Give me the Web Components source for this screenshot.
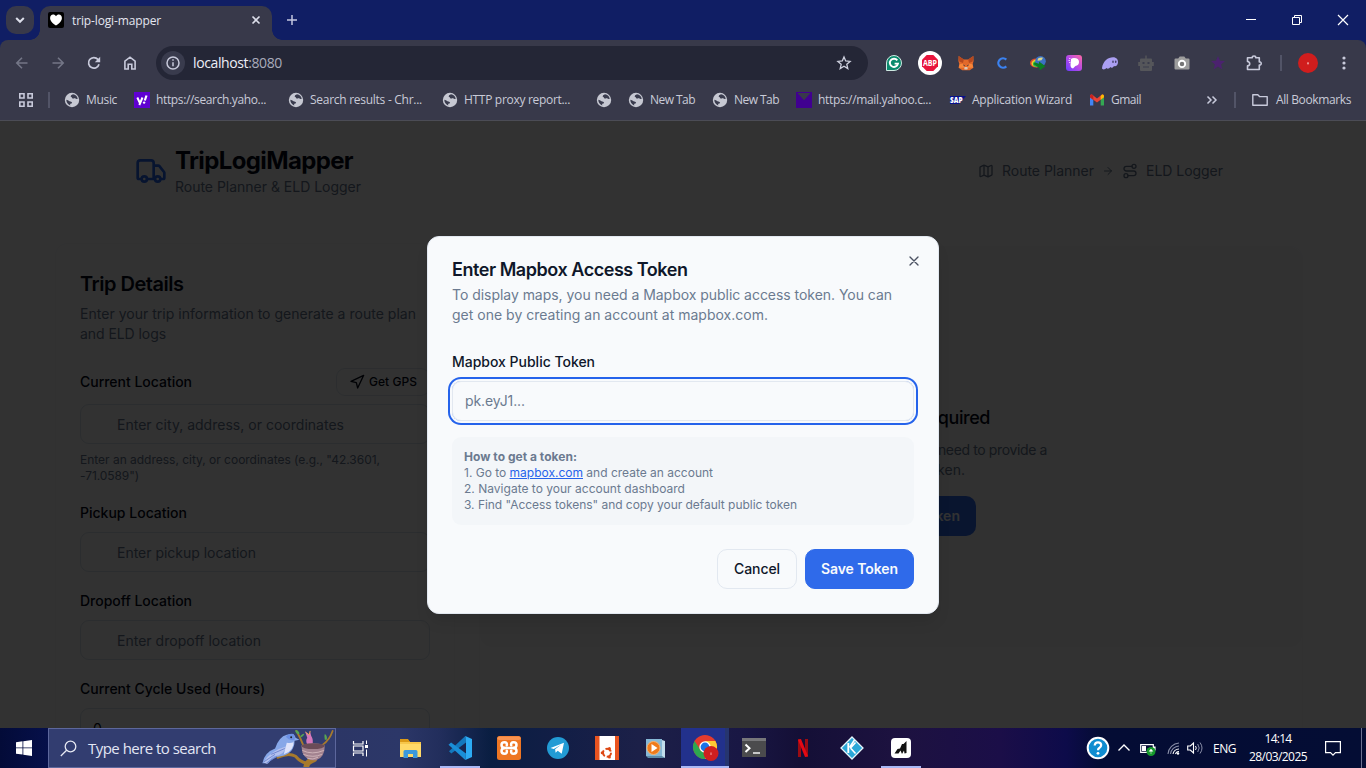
<!DOCTYPE html>
<html lang="en">
<head>
<meta charset="utf-8">
<title>trip-logi-mapper</title>
<style>
html,body{margin:0;height:768px;width:1366px;overflow:hidden;background:#101e64}
body{display:flex;flex-direction:column;font-family:"Open Sans","Noto Sans",sans-serif}
</style>
</head>
<body>
<browser-tabs></browser-tabs>
<browser-toolbar></browser-toolbar>
<bookmarks-bar></bookmarks-bar>
<app-page></app-page>
<task-bar></task-bar>
<script>
const L=(body,w=2)=>`<svg viewBox="0 0 24 24" fill="none" stroke="currentColor" stroke-width="${w}" stroke-linecap="round" stroke-linejoin="round">${body}</svg>`;
const V=(body,vb='0 0 24 24')=>`<svg viewBox="${vb}">${body}</svg>`;
const ICONS={
 truck:L('<path d="M14 18V6a2 2 0 0 0-2-2H4a2 2 0 0 0-2 2v11a1 1 0 0 0 1 1h2M15 18H9M19 18h2a1 1 0 0 0 1-1v-3.65a1 1 0 0 0-.22-.624l-3.48-4.35A1 1 0 0 0 17.52 8H14"/><circle cx="17" cy="18" r="2"/><circle cx="7" cy="18" r="2"/>'),
 map:L('<path d="M14.106 5.553a2 2 0 0 0 1.788 0l3.659-1.83A1 1 0 0 1 21 4.619v12.764a1 1 0 0 1-.553.894l-4.553 2.277a2 2 0 0 1-1.788 0l-4.212-2.106a2 2 0 0 0-1.788 0l-3.659 1.83A1 1 0 0 1 3 19.381V6.618a1 1 0 0 1 .553-.894l4.553-2.277a2 2 0 0 1 1.788 0zM15 5.764v15M9 3.236v15"/>'),
 arrow:L('<path d="M5 12h14M12 5l7 7-7 7"/>'),
 route:L('<circle cx="6" cy="19" r="3"/><path d="M9 19h8.5a3.5 3.5 0 0 0 0-7h-11a3.5 3.5 0 0 1 0-7H15"/><circle cx="18" cy="5" r="3"/>'),
 nav:L('<path d="M3 11 22 2l-9 19-2-8z"/>'),
 x:L('<path d="M18 6 6 18M6 6l12 12"/>'),
 chev:V('<path d="M8.2 10l3.8 3.8 3.8-3.8" fill="none" stroke="#dcdeea" stroke-width="2"/>'),
 heart:V('<rect width="16" height="16" rx="2" fill="#000"/><path d="M8 13.6C3.4 10.2 2.1 8.200 2.100 5.900 2.100 3.900 3.400 2.600 5.100 2.600c1.200 0 2.300.6 2.900 1.600.6-1 1.700-1.600 2.900-1.600 1.700 0 3 1.300 3 3.300 0 2.300-1.300 4.300-5.900 7.700z" fill="#fff"/>','0 0 16 16'),
 close:V('<path d="M4.500 4.500l7 7m0-7l-7 7" stroke="#dcdeea" stroke-width="1.600"/>','0 0 16 16'),
 plus:V('<path d="M8 3v10M3 8h10" stroke="#c3c7df" stroke-width="1.500"/>','0 0 16 16'),
 min:V('<path d="M3 7.500h10" stroke="#fff"/>','0 0 16 16'),
 restore:V('<path d="M3.500 5.500h7v7h-7zM5.500 5.500v-2h7v7h-2" fill="none" stroke="#fff"/>','0 0 16 16'),
 winx:V('<path d="M3 3l10 10M13 3L3 13" stroke="#fff" stroke-width="1.200"/>','0 0 16 16'),
 back:V('<path d="M13.500 8H3M8 2.800L2.800 8 8 13.200" fill="none" stroke="#747687" stroke-width="1.600"/>','0 0 16 16'),
 fwd:V('<path d="M2.500 8H13M8 2.800L13.200 8 8 13.200" fill="none" stroke="#747687" stroke-width="1.600"/>','0 0 16 16'),
 reload:V('<path d="M13 9.200A5.300 5.300 0 1 1 11.900 4.400L13.400 6" fill="none" stroke="#c8cadb" stroke-width="1.700"/><path d="M14.200 1.800v5.400H8.800z" fill="#c8cadb"/>','0 0 16 16'),
 home:V('<path d="M2.900 14V6.200L8 2.200l5.100 4V14h-3.300V9.200H6.200V14z" fill="none" stroke="#c8cadb" stroke-width="1.600"/>','0 0 16 16'),
 info:V('<circle cx="12" cy="12" r="12" fill="#393b4d"/><circle cx="12" cy="12" r="6" fill="none" stroke="#c8cadb" stroke-width="1.500"/><path d="M12 11.200v4M12 8.300v1.500" stroke="#c8cadb" stroke-width="1.500"/>'),
 star:V('<path d="M8 2l1.700 4 4.400.4-3.300 2.900 1 4.300L8 11.300l-3.800 2.300 1-4.300L1.900 6.400l4.400-.4z" fill="none" stroke="#d0d2e0" stroke-width="1.300"/>','0 0 16 16'),
 grammarly:V('<path d="M.5 15.500V8A7.500 7.500 0 1 1 8 15.500z" fill="#0b8a6d" stroke="#cfe9e2"/><path d="M11.300 5.400A4.100 4.100 0 1 0 12 8.600H8.600" fill="none" stroke="#fff" stroke-width="1.900"/>','0 0 16 16'),
 abp:V('<circle cx="12" cy="12" r="12" fill="#fff"/><path d="M8.700 4h6.600L20 8.700v6.600L15.300 20H8.700L4 15.300V8.700z" fill="#e8153d"/><text x="12" y="14.900" font-family="Open Sans" font-weight="700" font-size="8" text-anchor="middle" textLength="14" lengthAdjust="spacingAndGlyphs" fill="#fff">ABP</text>'),
 fox:V('<path d="M.6 1l5.200 3.400h4.400L15.400 1l.2 5-1 3.200.9 3.500-3.800 2.600H4.300L.5 12.700l.9-3.500L.4 6z" fill="#e2692a"/><path d="M.6 1l5.200 3.400L5 8 1.300 6.500zM15.400 1l-5.200 3.400L11 8l3.700-1.500z" fill="#b5481f"/><path d="M1.500 9.200L5 8.700l1.500 4-5.500 0zM14.500 9.200l-3.500-.5-1.500 4h5.500z" fill="#f8873a"/><path d="M4.800 9.600l2 .7-.4.9zM11.200 9.600l-2 .7.400.9z" fill="#263347"/><path d="M6.200 13l.5-1h2.600l.5 1-.4 1.600H6.600z" fill="#d9c4b4"/>','0 0 16 16'),
 cee:V('<path d="M12.300 4.600A4.700 4.700 0 1 0 12.300 11.400" fill="none" stroke="#3b82f0" stroke-width="2.300"/>','0 0 16 16'),
 idm:V('<ellipse cx="6" cy="8" rx="6" ry="4.500" fill="#dd4a2e"/><ellipse cx="6.500" cy="8.400" rx="5" ry="3.800" fill="#ecd02b"/><ellipse cx="7" cy="9" rx="4" ry="3" fill="#28b34b"/><circle cx="10.500" cy="6.300" r="5.300" fill="#3c72c4"/><path d="M8 3.500a5 3 0 0 1 5-.8l-1.500 2.500-4 .5z" fill="#d9d58c"/><path d="M5 7.500l4 1.200V6.500l6.500 4.700-6 4.300V13L3.500 9z" fill="#0a7d22"/>','0 0 16 16'),
 pcard:V('<defs><linearGradient id="g" x1="0" y1="1" x2="1" y2="0"><stop stop-color="#6a3cff"/><stop offset=".5" stop-color="#b64ae8"/><stop offset="1" stop-color="#ff6aa2"/></linearGradient></defs><rect width="16" height="16" rx="3" fill="url(#g)"/><path d="M5 4Q6 3 8 3q5 0 5 4 0 3.300-3.600 4L7 13.500Q4.500 13 4.500 10z" fill="#fff"/><path d="M3 3h1.500v1H3zM2.500 5H4v1H2.500zM3 7h1.500v1H3z" fill="#e9c6ff"/>','0 0 16 16'),
 phantom:V('<path d="M0 13C1 6 6 2.200 11 2.200c3.600 0 5.200 2.400 5 5.300-.2 3-2.400 4.200-4 3.400-1 1.900-2.600 2.300-3.600 1.200C7 14 5.400 14.300 4.600 13 3 14.800.2 15 0 13z" fill="#ab9ff2"/><ellipse cx="11" cy="6.700" rx=".8" ry="1.300" fill="#45416a"/><ellipse cx="13.700" cy="6.700" rx=".8" ry="1.300" fill="#45416a"/>','0 0 16 16'),
 robot:V('<path d="M7.300.5h1.400v3h4.300q1 0 1 1.200V7h1.800v4H14v4q0 1-1 1H3q-1 0-1-1v-4H.2V7H2V4.700q0-1.200 1-1.200h4.300z" fill="#55565a"/><path d="M4.500 7h2v2h-2zM9.500 7h2v2h-2zM5 11.500h6v1H5z" fill="#3b3d4c"/>','0 0 16 16'),
 camera:V('<path d="M.5 4.500Q.5 3.400 1.600 3.400h2.600L5.700 1.500h4.600l1.500 1.900h2.600q1.100 0 1.100 1.100V13.500q0 1.100-1.100 1.100H1.600Q.5 14.600.5 13.500z" fill="#9d9d9d"/><circle cx="8" cy="8.900" r="3.200" fill="#777" stroke="#fff" stroke-width="1.900"/>','0 0 16 16'),
 pstar:V('<path d="M8 1l2 4.700 5 .4-3.900 3.300 1.300 5L8 11.500l-4.400 2.900 1.300-5L1 6.100l5-.4z" fill="#4b226f"/>','0 0 16 16'),
 puzzle:V('<path d="M1.500 2.700h4.800q-.1-1.700 1.700-1.700t1.700 1.700h3.600v4.200q1.900-.1 1.900 1.600t-1.900 1.600v4.400H1.500V10.900q2.200-.2 2.200-2.200t-2.200-2.200z" fill="none" stroke="#c8cadb" stroke-width="1.600" stroke-linejoin="round"/>','0 0 16 16'),
 avatar:V('<circle cx="10" cy="10" r="10" fill="#d01d1d"/><path d="M10 9v2.500M9.500 10.500h1" stroke="#f2b2b2"/>','0 0 20 20'),
 dots:V('<circle cx="8" cy="3" r="1.600"/><circle cx="8" cy="8" r="1.600"/><circle cx="8" cy="13" r="1.600"/>','0 0 16 16'),
 grid:V('<path d="M1.800 1.800h4.200v4.200H1.800zM10 1.800h4.200v4.200H10zM1.800 10h4.200v4.200H1.800zM10 10h4.200v4.200H10z" fill="none" stroke="#c8cadb" stroke-width="1.600"/>','0 0 16 16'),
 globe:V('<circle cx="8" cy="8" r="7.200" fill="#c6c8d2"/><path d="M9 2.200Q6.500 3 6.600 4.500 8 5 8.200 6.300q1.300.7 2.600-.3Q12.500 7.500 13.700 6.700 13 3 9 2.200zM2.300 7.800Q4 8 5.500 9.200q2 .2 2.600 1.300-.3 1.500-1.900 1.300Q6 13 6.300 13.600 2.500 12 2.300 7.800z" fill="#3a3c4e"/>','0 0 16 16'),
 yahoo:V('<rect width="16" height="16" fill="#5f01d1"/><path d="M3.300 5.500l2.400 5M8.500 5.500L5.300 13" stroke="#fff" stroke-width="2"/><path d="M12.500 3.500L10.800 8.500" stroke="#fff" stroke-width="2.200"/><circle cx="10.100" cy="10.600" r="1.200" fill="#fff"/>','0 0 16 16'),
 ymail:V('<rect width="16" height="16" fill="#400090"/><path d="M1.500 1h13L8 8.200z" fill="#38394a"/>','0 0 16 16'),
 sap:V('<path d="M0 4h16L9 12H0z" fill="#06108c"/><text x="0" y="11" font-family="Open Sans" font-size="8" font-weight="800" textLength="12.500" lengthAdjust="spacingAndGlyphs" fill="#fff">SAP</text>','0 0 16 16'),
 gmail:V('<path d="M1 4v9.500h3.300V7z" fill="#4285f4"/><path d="M15 4v9.500h-3.300V7z" fill="#34a853"/><path d="M1 4.200Q1 2 3 2.600L8 6.500l5-3.900Q15 2 15 4.200v1L8 10.400 1 5.200z" fill="#ea4335"/><path d="M11.700 4L13 2.600Q15 2 15 4.200v1l-3.300 2.500z" fill="#fbbc04"/><path d="M1 4.200V5.400L4.300 7.900V4L3 2.600Q1 2 1 4.200z" fill="#c5221f"/>','0 0 16 16'),
 more:V('<path d="M3.500 4.500L7 8l-3.500 3.500M8.500 4.500L12 8l-3.500 3.500" fill="none" stroke="#c8cadb" stroke-width="1.500"/>','0 0 16 16'),
 folder:V('<path d="M.8 2.800h5l1.700 1.800h7.700v8.600H.8z" fill="none" stroke="#c8cadb" stroke-width="1.400" stroke-linejoin="round"/>','0 0 16 16'),
 win:V('<path d="M0 2.200l6.500-.9v6.200H0zM7.300 1.200L16 0v7.500H7.300zM0 8.300h6.500v6.200L0 13.700zM7.300 8.300H16V16l-8.700-1.300z" fill="#fff"/>','0 0 16 16'),
 search:V('<circle cx="10.500" cy="6.500" r="5.300" fill="none" stroke="#e6e8f2" stroke-width="1.300"/><path d="M6.600 10.300L.8 16" stroke="#e6e8f2" stroke-width="1.300"/>','0 0 17 17'),
 taskview:V('<path d="M1.500.5V3.500h9.500V.5M1.500 15.500V12.500h9.500V15.500M1.500 5.500h9.500v5H1.500z" fill="none" stroke="#fff" stroke-width="1.200"/><path d="M14.500 0v3.500M14.500 9v7" stroke="#fff"/><path d="M13 4.500h3v3h-3z" fill="#fff"/>','0 0 17 16'),
 bird:V(`<g fill="none" stroke="#a77a2c" stroke-linecap="round"><path d="M18 29Q29 24 36 28 41 34 47 35" stroke-width="3"/><path d="M47 39Q47 34 55 31" stroke-width="6"/><path d="M37 2Q41 9 45 19" stroke-width="2"/><path d="M74 2Q71 11 64 16" stroke-width="1.800"/></g>
 <path d="M2 35Q4 24 15 20 19 8 27 6 35 3 36 9l4 2-5 1Q35 25 21 28 12 29 8 35z" fill="#87a7e8"/><path d="M3 34Q11 22 26 18 25 27 14 28 9 31 7 36z" fill="#b4c1ee"/><path d="M3 34l12-8M6 35l11-7M11 26l14-6" stroke="#7187cf" fill="none"/><path d="M27 14Q34 15 34 12q1 10-10 14z" fill="#dfe3fa"/><path d="M26 8q3-4 8-3 2 3 1 6-5 2-9-3z" fill="#6c90e4"/><circle cx="31.500" cy="8.500" r="1" fill="#222"/>
 <path d="M48 16q-2-4 0-7l-2-6 4 3 1-3 1 4q3 5 1 9z" fill="#d578bc"/><path d="M46 3l4 3 1-4" stroke="#f2a65a" fill="none"/><path d="M42 17Q54 12 66 17 66 30 57 32 47 33 43 24z" fill="#a38390"/><ellipse cx="54" cy="17.500" rx="12" ry="3" fill="#6b4c58"/><path d="M43 22q10 5 22 0M44 26q10 4 19 0M48 30q6 2 11-1" stroke="#cfb3b8" fill="none"/><path d="M38 5q-3-2-2-4 4 1 4 4zM41 7q3-3 4-2-1 3-4 4zM66 11q-1-4 0-6 3 2 2 6z" fill="#58a552"/>`,'0 0 76 40'),
 explorer:V('<path d="M1 4h8l2 2h11v15H1z" fill="#f7c64a"/><path d="M1 3h8l2 3H1z" fill="#dc9a17"/><path d="M1 8h21v13H1z" fill="#ffd968"/><path d="M4.500 22v-6.500q0-1.500 1.500-1.500h11q1.500 0 1.500 1.500V22h-4.500v-4H9v4z" fill="#3c98dc"/>'),
 vscode:V('<path d="M17.300 0L1 15.200l2.300 2.200L18 6.500z" fill="#1378bd"/><path d="M17.300 24L.5 8.800l2.600-2.200L18 17.500z" fill="#1a8fd8"/><path d="M17.300 0L24 3v18l-6.700 3L18 17.500V6.500z" fill="#2cabf3"/>'),
 xampp:V('<rect width="24" height="24" rx="2.500" fill="#ee7623"/><rect x=".5" y=".5" width="23" height="3.500" rx="1.700" fill="#f99350"/><g fill="none" stroke="#fff" stroke-width="2.500" stroke-linecap="round" stroke-linejoin="round"><path d="M9.800 9.300Q10.300 6.300 7.500 6.300 4.500 6.300 4.500 9 4.500 12 8 12h8q3.500 0 3.500-3 0-2.700-3-2.700-2.800 0-2.300 3"/><path d="M9.800 14.700Q10.300 17.700 7.500 17.700 4.500 17.700 4.500 15 4.500 12 8 12M14.200 14.700q-.5 3 2.300 3 3 0 3-2.700 0-3-3.500-3"/></g>'),
 telegram:V('<circle cx="12" cy="12" r="11" fill="#229bd4"/><path d="M4.500 12L18 6.700l-2.300 11-4-3-2.100 2-.5-3.500 6-4.500-7.300 4.300z" fill="#fff"/>'),
 ubuntu:V('<rect width="24" height="24" fill="#fff"/><path d="M0 0h4.500v24H0zM20 0h4v24h-4z" fill="#e95420"/><circle cx="12" cy="16.800" r="4" fill="none" stroke="#dd4814" stroke-width="2" stroke-dasharray="6.400 2"/><circle cx="7.200" cy="16.800" r="1.500" fill="#dd4814"/><circle cx="14.400" cy="12.600" r="1.500" fill="#dd4814"/><circle cx="14.400" cy="21" r="1.500" fill="#dd4814"/>'),
 media:V('<path d="M2 3h16v17H2z" fill="#86b8d6"/><path d="M18 4l3 1v17l-3-1z" fill="#c2deec"/><path d="M2 20h16l3 2H4z" fill="#5d8ba8"/><circle cx="9.500" cy="12" r="6.500" fill="#ee7a1b" stroke="#f8b36e"/><path d="M7.500 8l6 4-6 4z" fill="#fff"/>'),
 chrome:V('<circle cx="13" cy="12" r="12" fill="#e33b2e"/><path d="M2.600 6A12 12 0 0 0 13 24l4-7-8-1z" fill="#2da94f"/><path d="M13 24A12 12 0 0 0 23.400 6H13l5 8z" fill="#fcc934"/><circle cx="13" cy="12" r="5.700" fill="#fff"/><circle cx="13" cy="12" r="4.400" fill="#1a73e8"/><circle cx="19" cy="18.500" r="7.500" fill="#cf1f1f"/><path d="M19 17.500v2.500" stroke="#f4a5a5"/>','0 0 27 27'),
 term:V('<rect y="2" width="24" height="19" rx=".5" fill="#4b4b4d"/><path d="M0 2h24v3H0z" fill="#77777a"/><path d="M3.500 8.500L7.500 12.300l-4 3.700" fill="none" stroke="#fff" stroke-width="2"/><path d="M11 17h7" stroke="#fff" stroke-width="1.400"/>'),
 netflix:V('<path d="M8.500 3v18M15.500 3v18" stroke="#9c0b12" stroke-width="3"/><path d="M8.500 3.500l7 17" stroke="#e50914" stroke-width="3.200"/>'),
 kodi:V('<path d="M12 1l11 11-11 11L1 12z" fill="#2aa8d8" stroke="#e6f6fc" stroke-width="1.300"/><path d="M8.300 7v10" stroke="#fff" stroke-width="1.900"/><path d="M14.500 4L9.500 11.500M10.500 12l5-5.500M10.500 12l5 5.500" stroke="#fff" stroke-width="1.600"/>'),
 quill:V('<rect x="2" y="2" width="20" height="20" rx="4" fill="#fff"/><path d="M5.500 17.500l3-4.500 2.500-.5 2-4.500 1.500 0L17.500 5v12l-2 .5-.5-3-2 3.500-1.500-3.500-2 3z" fill="#111"/>'),
 help:V('<circle cx="12" cy="12" r="10.300" fill="#108dd0" stroke="#fff" stroke-width="2"/><path d="M8.700 9.500Q8.900 6.300 12 6.300t3.200 2.800Q15.200 11 13.300 12 12 12.800 12 14.300" fill="none" stroke="#fff" stroke-width="2.200"/><circle cx="12" cy="17.300" r="1.400" fill="#fff"/>'),
 up:V('<path d="M2.500 10.500L8 5l5.500 5.500" fill="none" stroke="#fff" stroke-width="1.400"/>','0 0 16 16'),
 batt:V('<path d="M.7 4.700h12.600v7.600H.7zM14 7h1v3h-1z" fill="none" stroke="#fff" stroke-width="1.200"/><path d="M2 6h4v5H2z" fill="#fff"/><circle cx="11" cy="11.500" r="4.500" fill="#15992b"/><path d="M11 9l1.800 2.300h-3.600zM11 11v3" fill="#fff" stroke="#fff" stroke-width=".5"/>','0 0 16 16'),
 wifi:V('<g fill="none" stroke="#8a8fa8" stroke-width="1.100"><path d="M1 14A12 12 0 0 1 12 3"/><path d="M3.500 14A9 9 0 0 1 12 6" /><path d="M6 14A6 6 0 0 1 12 9" stroke="#fff"/><path d="M8.500 14A3.500 3.500 0 0 1 12 11.500" stroke="#fff"/></g><circle cx="11" cy="13.500" r="1.200" fill="#fff"/>','0 0 16 16'),
 sound:V('<path d="M.7 6h2.600L6.500 3v10L3.300 10H.7z" fill="none" stroke="#fff" stroke-width="1.100"/><path d="M8.500 6q1.500 2 0 4" stroke="#fff" fill="none"/><path d="M10.700 4q3 4 0 8M13 2.500q4 5.500 0 11" stroke="#8a8fa8" fill="none"/>','0 0 16 16'),
 note:V('<path d="M.6 1.600h14.800v11H10.500L8 15.200 5.500 12.600H.6z" fill="none" stroke="#fff" stroke-width="1.200"/>','0 0 16 16')
};
const define=(tag,html)=>customElements.define(tag,class extends HTMLElement{
  constructor(){super();this.attachShadow({mode:'open'}).innerHTML=html}
});

define('browser-tabs',`<style>
:host{display:flex;height:40px;background:#101e64;padding-left:6px;box-sizing:border-box;color:#e4e6f0;font-size:12px}
.find{width:28px;height:28px;margin-top:6px;border-radius:10px;background:#38394a;display:grid;place-items:center}
.tab{position:relative;display:flex;align-items:center;box-sizing:border-box;width:232px;height:34px;margin:6px 0 0 6px;padding:0 8px;background:#38394a;border-radius:10px 10px 0 0}
.tab::before,.tab::after{content:"";position:absolute;bottom:0;width:10px;height:10px}
.tab::before{left:-10px;background:radial-gradient(circle at 0 0,transparent 9.500px,#38394a 10px)}
.tab::after{right:-10px;background:radial-gradient(circle at 100% 0,transparent 9.500px,#38394a 10px)}
.tab fit-text{margin-left:8px;flex:1;margin-top:-5px}
.tab ui-icon{margin-top:-6px}
.plus{margin:12px 0 0 12px}
.win{display:flex;margin-left:auto}.win span{width:46px;display:grid;place-items:center}
</style><div class="find"><ui-icon name="chev" size="24"></ui-icon></div>
<div class="tab"><ui-icon name="heart" size="16"></ui-icon><fit-text w="89">trip-logi-mapper</fit-text><ui-icon name="close" size="16"></ui-icon></div>
<ui-icon class="plus" name="plus" size="16"></ui-icon>
<div class="win"><span><ui-icon name="min" size="16"></ui-icon></span><span><ui-icon name="restore" size="16"></ui-icon></span><span><ui-icon name="winx" size="16"></ui-icon></span></div>`);

define('browser-toolbar',`<style>
:host{display:flex;align-items:center;height:46px;background:#38394a;border-radius:8px 8px 0 0;padding-left:4px;box-sizing:border-box;color:#c8cadb}
.c{width:36px;display:grid;place-items:center;flex:none}
.omni{display:flex;align-items:center;box-sizing:border-box;width:712px;height:34px;margin:0 8px;border-radius:17px;background:#242636;padding:0 16px 0 5px;font-size:14px;color:#a9abbb}
.omni fit-text{margin:-2px 0 0 8px;flex:1}.omni b{font-weight:400;color:#eceef6}
.sep{width:2px;height:16px;background:#525467;margin:0 8px}
</style><span class="c"><ui-icon name="back" size="16"></ui-icon></span><span class="c"><ui-icon name="fwd" size="16"></ui-icon></span><span class="c"><ui-icon name="reload" size="16"></ui-icon></span><span class="c"><ui-icon name="home" size="16"></ui-icon></span>
<div class="omni"><ui-icon name="info" size="24"></ui-icon><fit-text w="89"><b>localhost</b>:8080</fit-text><ui-icon name="star" size="16"></ui-icon></div>
${['grammarly','abp','fox','cee','idm','pcard','phantom','robot','camera','pstar','puzzle'].map(n=>`<span class="c"><ui-icon name="${n}" size="${n=='abp'?24:16}"></ui-icon></span>`).join('')}
<span class="sep"></span><span class="c"><ui-icon name="avatar" size="20"></ui-icon></span><span class="c"><ui-icon name="dots" size="16"></ui-icon></span>`);

const marks=[['globe','Music',70,31],['yahoo','https://search.yaho...',154,110],['globe','Search results - Chr...',154,112],['globe','HTTP proxy report...',154,106],['globe','',32,0],['globe','New Tab',84,45],['globe','New Tab',84,45],['ymail','https://mail.yahoo.c...',154,113],['sap','Application Wizard',139,100],['gmail','Gmail',115,30]];
define('bookmarks-bar',`<style>
:host{display:flex;align-items:center;height:35px;background:#38394a;border-bottom:1px solid #4b4c55;box-sizing:border-box;padding:0 0 7px 18px;color:#c9cbd8;font-size:12px}
.i{display:flex;align-items:center;gap:6px;flex:none;height:28px}
.sep{width:2px;height:16px;background:#525467;flex:none}
</style><ui-icon name="grid" size="16"></ui-icon><span class="sep" style="margin:0 14px"></span>
${marks.map(m=>`<span class="i" style="width:${m[2]}px"><ui-icon name="${m[0]}" size="16"></ui-icon>${m[1]?`<fit-text w="${m[3]}">${m[1]}</fit-text>`:''}</span>`).join('')}
<ui-icon name="more" size="16"></ui-icon><span class="sep" style="margin:0 16px 0 14px"></span><span class="i" style="gap:8px"><ui-icon name="folder" size="16"></ui-icon><fit-text w="75">All Bookmarks</fit-text></span>`);

define('app-page',`<style>
:host{display:block;position:relative;height:607px;overflow:hidden;background:#fafafb;color:#020817;font-family:Inter,sans-serif;font-size:14px;line-height:20px}
.cols{display:flex;gap:24px;margin:46px 0 0 55px;align-items:flex-start}
.shade{position:absolute;inset:0;background:rgba(0,0,0,.8);display:flex;justify-content:center;align-items:flex-start;padding-top:115px}
</style><app-header></app-header><div class="cols"><trip-form></trip-form><map-panel></map-panel></div><div class="shade"><token-dialog></token-dialog></div>`);

define('app-header',`<style>
:host{display:flex;align-items:center;padding:24px 143px 0 135px;height:52px}
.t{margin-left:8px}.h{display:block;font-size:24px;line-height:32px;font-weight:700}
.s{display:block;color:#64748b}
nav{display:flex;align-items:center;margin-left:auto;color:#64748b}
ui-icon[name=truck]{color:#2563eb}
</style><ui-icon name="truck" size="32"></ui-icon><div class="t"><fit-text class="h" w="178">TripLogiMapper</fit-text><fit-text class="s" w="186">Route Planner &amp; ELD Logger</fit-text></div>
<nav><ui-icon name="map" size="16"></ui-icon><fit-text w="92" style="margin:0 8px">Route Planner</fit-text><ui-icon name="arrow" size="12"></ui-icon><ui-icon name="route" size="16" style="margin:0 8px"></ui-icon><fit-text w="77">ELD Logger</fit-text></nav>`);

define('trip-form',`<style>
:host{display:block;box-sizing:border-box;width:400px;height:600px;border:1px solid #f3f4f6;border-radius:12px;background:#fafafb;padding:28px 24px}
h2{margin:0;font-size:20px;line-height:24px;font-weight:560}
.d{color:#64748b;margin-top:8px}.d fit-text,.help fit-text{display:block}
.row{display:flex;justify-content:space-between;align-items:center;margin-top:24px}
.gps{display:flex;align-items:center;gap:4px;box-sizing:border-box;width:94px;height:28px;border:1px solid #dae2eb;border-radius:9px;padding:0 12px;font-size:12px;font-weight:480}
.lb{font-weight:470;display:block}
.in{box-sizing:border-box;width:350px;height:40px;border:1px solid #d7dfe9;border-radius:9px;padding:10px 36px;color:#64748b;margin-top:9px}
.row+.in{margin-top:8px}
.help{font-size:12px;line-height:16px;color:#64748b;margin:8px 0 19px}
</style><h2><fit-text w="103.500">Trip Details</fit-text></h2>
<div class="d"><fit-text w="336">Enter your trip information to generate a route plan</fit-text><fit-text w="86">and ELD logs</fit-text></div>
<div class="row"><fit-text class="lb" w="112">Current Location</fit-text><span class="gps"><ui-icon name="nav" size="16"></ui-icon><fit-text w="48">Get GPS</fit-text></span></div>
<div class="in"><fit-text w="227">Enter city, address, or coordinates</fit-text></div>
<div class="help"><fit-text w="300">Enter an address, city, or coordinates (e.g., "42.3601,</fit-text><fit-text w="59">-71.0589")</fit-text></div>
<fit-text class="lb" w="107">Pickup Location</fit-text><div class="in"><fit-text w="139">Enter pickup location</fit-text></div>
<fit-text class="lb" w="112" style="margin-top:19px">Dropoff Location</fit-text><div class="in"><fit-text w="144">Enter dropoff location</fit-text></div>
<fit-text class="lb" w="185" style="margin-top:19px">Current Cycle Used (Hours)</fit-text><div class="in" style="padding-left:12px;color:#020817">0</div>`);

define('map-panel',`<style>
:host{display:block;box-sizing:border-box;width:824px;height:600px;border:1px solid #f4f4f6;border-radius:12px;background:#fafafb;overflow:hidden;margin-top:3px}
.m{box-sizing:border-box;height:400px;border-radius:12px;background:#f4f4f5;padding:157px 1px 0 0;display:flex;flex-direction:column;align-items:center;color:#64748b}
h3{margin:0 0 8px;font-size:18px;line-height:28px;font-weight:480;color:#020817}
.b{margin-top:16px;box-sizing:border-box;width:171px;height:40px;border-radius:10px;background:#2f6aea;color:#f8fafc;font-weight:600;padding:10px 16px}
</style><div class="m"><h3><fit-text w="199">Mapbox Token Required</fit-text></h3><fit-text w="313">To display interactive maps, you need to provide a</fit-text><fit-text w="149">Mapbox access token.</fit-text><div class="b"><fit-text w="139">Enter Mapbox Token</fit-text></div></div>`);

define('token-dialog',`<style>
:host{display:block;position:relative;box-sizing:border-box;width:512px;height:378px;border:1px solid #e2e8f0;border-radius:12px;background:#f8fafc;padding:24px;box-shadow:0 10px 15px -3px rgba(0,0,0,.1);color:#0f172a}
.x{position:absolute;top:16px;right:16px;color:#4b5262}
h2{margin:0 0 6px;font-size:18px;line-height:18px;font-weight:560}
.d{color:#6b7a90;margin-bottom:30px}.d fit-text,.info fit-text{display:block}
.lb{display:block;line-height:14px;font-weight:470;margin-bottom:12px}
.in{box-sizing:border-box;height:40px;border:1px solid #e2e8f0;border-radius:9px;padding:9px 12px;color:#6b7a90;box-shadow:0 0 0 2px #f8fafc,0 0 0 4px #2563eb}
.info{box-sizing:border-box;margin-top:16px;height:88px;border-radius:9px;background:#f3f6f9;padding:12px;font-size:12px;line-height:16px;color:#6b7a90}
.info a{color:#2563eb;text-decoration:underline}
.f{display:flex;justify-content:flex-end;gap:8px;margin-top:24px;font-weight:480}
.f div{box-sizing:border-box;height:40px;border-radius:10px;border:1px solid #e2e8f0;padding:9px 16px}
.f .p{background:#2f6aea;border-color:#2f6aea;color:#f8fafc;width:109px;padding:9px 15px;font-weight:580}
</style><ui-icon class="x" name="x" size="16"></ui-icon><h2><fit-text w="235.500">Enter Mapbox Access Token</fit-text></h2>
<div class="d"><fit-text w="440">To display maps, you need a Mapbox public access token. You can</fit-text><fit-text w="316">get one by creating an account at mapbox.com.</fit-text></div>
<fit-text class="lb" w="143">Mapbox Public Token</fit-text><div class="in"><fit-text w="60">pk.eyJ1...</fit-text></div>
<div class="info"><fit-text w="113" style="font-weight:650">How to get a token:</fit-text><fit-text w="249">1. Go to <a>mapbox.com</a> and create an account</fit-text><fit-text w="221">2. Navigate to your account dashboard</fit-text><fit-text w="333">3. Find "Access tokens" and copy your default public token</fit-text></div>
<div class="f"><div><fit-text w="46">Cancel</fit-text></div><div class="p"><fit-text w="77">Save Token</fit-text></div></div>`);

define('task-bar',`<style>
:host{display:flex;height:40px;color:#fff;background:linear-gradient(90deg,#030b38 0,#06104a 48px,#2c3666 336px,#2c3768 400px,#222e5c 440px,#0a1e42 490px,#121e46 560px,#1c2048 640px,#191744 740px,#140f36 800px,#1d1240 900px,#1b0e48 1000px,#0d0b4a 1066px,#040c34 1100px,#040d34 100%)}
.c{width:49px;display:grid;place-items:center;box-sizing:border-box;flex:none}
.s{display:flex;align-items:center;box-sizing:border-box;width:288px;border:1px solid #5d679c;background:#323d70;padding-left:11px;font-size:15px;color:#e3e6f4;overflow:hidden}
.s fit-text{margin-left:11px;flex:1}
.on{box-shadow:inset 0 -2px #a9b8f5;width:40px;margin:0 4.500px}
.act{box-shadow:inset 0 -2px #a9b8f5;background:linear-gradient(90deg,#22318c 44px,#26356f 44px);width:48px;margin-left:1px}
.tray{display:flex;align-items:center;margin-left:auto;font-size:12px}
.clock{display:flex;flex-direction:column;align-items:center;line-height:18px;width:58px;margin:0 18px 0 13px}
.end{width:1px;height:40px;background:#6b7191;margin:0 4px 0 20px}
</style><span class="c" style="width:48px"><ui-icon name="win" size="16"></ui-icon></span>
<div class="s"><ui-icon name="search" size="17"></ui-icon><fit-text w="128">Type here to search</fit-text><ui-icon name="bird" size="75" h="39"></ui-icon></div>
<span class="c" style="width:50px;padding-right:2px"><ui-icon name="taskview" size="17"></ui-icon></span>
<span class="c"><ui-icon name="explorer" size="24"></ui-icon></span><span class="c on"><ui-icon name="vscode" size="24"></ui-icon></span>
${['xampp','telegram','ubuntu','media'].map(n=>`<span class="c"><ui-icon name="${n}" size="24"></ui-icon></span>`).join('')}
<span class="c act"><ui-icon name="chrome" size="27"></ui-icon></span>
${['term','netflix','kodi'].map(n=>`<span class="c"><ui-icon name="${n}" size="24"></ui-icon></span>`).join('')}
<span class="c on"><ui-icon name="quill" size="24"></ui-icon></span>
<div class="tray"><ui-icon name="help" size="24"></ui-icon><ui-icon name="up" size="16" style="margin-left:6px"></ui-icon><ui-icon name="batt" size="16" style="margin:0 11px 0 8px"></ui-icon><ui-icon name="wifi" size="16"></ui-icon><ui-icon name="sound" size="16" style="margin:0 10px 0 4px"></ui-icon><fit-text w="23">ENG</fit-text>
<div class="clock"><fit-text w="27">14:14</fit-text><fit-text w="58">28/03/2025</fit-text></div><ui-icon name="note" size="16"></ui-icon><span class="end"></span></div>`);

customElements.define('ui-icon',class extends HTMLElement{
  connectedCallback(){
    if(this.shadowRoot)return;
    const w=this.getAttribute('size'),h=this.getAttribute('h')||w;
    this.attachShadow({mode:'open'}).innerHTML=`<style>:host{display:block;flex:none;width:${w}px;height:${h}px}svg{display:block;width:100%;height:100%;fill:currentColor;overflow:visible}svg[fill=none]{fill:none}</style>${ICONS[this.getAttribute('name')]}`;
  }
});

/* Sets one line of text to a given advance width by spreading its letters. */
customElements.define('fit-text',class extends HTMLElement{
  connectedCallback(){
    if(this.shadowRoot)return;
    this.attachShadow({mode:'open'}).innerHTML='<style>:host{display:inline-block;white-space:nowrap}</style><slot></slot>';
    const r=document.createRange();r.selectNodeContents(this);
    const w=+this.getAttribute('w'),n=r.getBoundingClientRect().width;
    if(w&&n)this.style.letterSpacing=((w-n)/this.textContent.length).toFixed(3)+'px';
  }
});
</script>
</body>
</html>
